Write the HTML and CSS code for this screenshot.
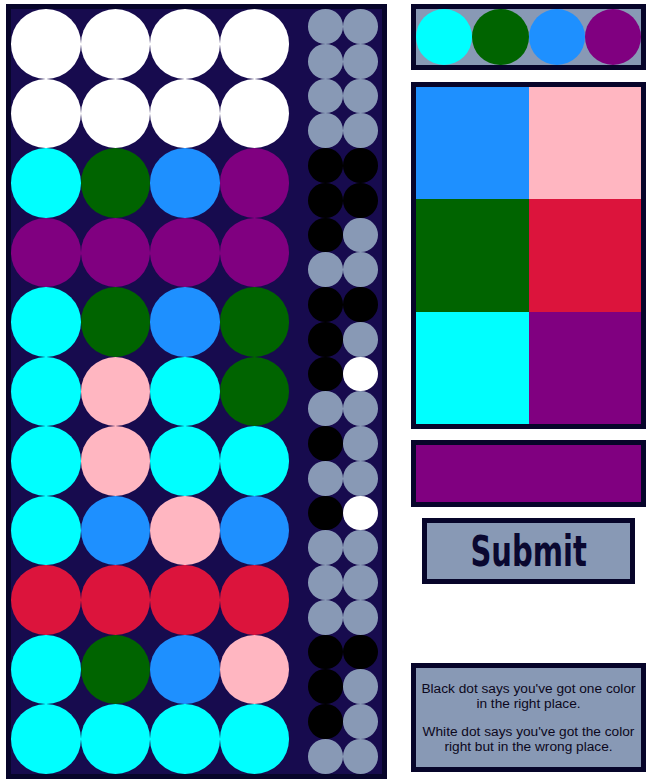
FILE: index.html
```html
<!DOCTYPE html>
<html>
<head>
<meta charset="utf-8">
<link rel="stylesheet" href="styles.css">
</head>
<body>
<div class="page">
  <div class="board">
    <div class="row">
      <span class="hole white"></span><span class="hole white"></span><span class="hole white"></span><span class="hole white"></span>
      <div class="pegs"><span class="peg"></span><span class="peg"></span><span class="peg"></span><span class="peg"></span></div>
    </div>
    <div class="row">
      <span class="hole white"></span><span class="hole white"></span><span class="hole white"></span><span class="hole white"></span>
      <div class="pegs"><span class="peg"></span><span class="peg"></span><span class="peg"></span><span class="peg"></span></div>
    </div>
    <div class="row">
      <span class="hole cyan"></span><span class="hole green"></span><span class="hole blue"></span><span class="hole purple"></span>
      <div class="pegs"><span class="peg black"></span><span class="peg black"></span><span class="peg black"></span><span class="peg black"></span></div>
    </div>
    <div class="row">
      <span class="hole purple"></span><span class="hole purple"></span><span class="hole purple"></span><span class="hole purple"></span>
      <div class="pegs"><span class="peg black"></span><span class="peg"></span><span class="peg"></span><span class="peg"></span></div>
    </div>
    <div class="row">
      <span class="hole cyan"></span><span class="hole green"></span><span class="hole blue"></span><span class="hole green"></span>
      <div class="pegs"><span class="peg black"></span><span class="peg black"></span><span class="peg black"></span><span class="peg"></span></div>
    </div>
    <div class="row">
      <span class="hole cyan"></span><span class="hole pink"></span><span class="hole cyan"></span><span class="hole green"></span>
      <div class="pegs"><span class="peg black"></span><span class="peg whitepeg"></span><span class="peg"></span><span class="peg"></span></div>
    </div>
    <div class="row">
      <span class="hole cyan"></span><span class="hole pink"></span><span class="hole cyan"></span><span class="hole cyan"></span>
      <div class="pegs"><span class="peg black"></span><span class="peg"></span><span class="peg"></span><span class="peg"></span></div>
    </div>
    <div class="row">
      <span class="hole cyan"></span><span class="hole blue"></span><span class="hole pink"></span><span class="hole blue"></span>
      <div class="pegs"><span class="peg black"></span><span class="peg whitepeg"></span><span class="peg"></span><span class="peg"></span></div>
    </div>
    <div class="row">
      <span class="hole crimson"></span><span class="hole crimson"></span><span class="hole crimson"></span><span class="hole crimson"></span>
      <div class="pegs"><span class="peg"></span><span class="peg"></span><span class="peg"></span><span class="peg"></span></div>
    </div>
    <div class="row">
      <span class="hole cyan"></span><span class="hole green"></span><span class="hole blue"></span><span class="hole pink"></span>
      <div class="pegs"><span class="peg black"></span><span class="peg black"></span><span class="peg black"></span><span class="peg"></span></div>
    </div>
    <div class="row">
      <span class="hole cyan"></span><span class="hole cyan"></span><span class="hole cyan"></span><span class="hole cyan"></span>
      <div class="pegs"><span class="peg black"></span><span class="peg"></span><span class="peg"></span><span class="peg"></span></div>
    </div>
  </div>

  <div class="side">
    <div class="panel secret">
      <span class="sdot cyan"></span><span class="sdot green"></span><span class="sdot blue"></span><span class="sdot purple"></span>
    </div>
    <div class="panel palette">
      <span class="swatch blue"></span><span class="swatch pink"></span>
      <span class="swatch green"></span><span class="swatch crimson"></span>
      <span class="swatch cyan"></span><span class="swatch purple"></span>
    </div>
    <div class="panel selected purple"></div>
    <button class="submit"><span class="submit-label">Submit</span></button>
    <div class="panel help">
      <p>Black dot says you've got one color in the right place.</p>
      <p>White dot says you've got the color right but in the wrong place.</p>
    </div>
  </div>
</div>
</body>
</html>
```
FILE: styles.css
```css
html, body {
  margin: 0;
  padding: 0;
  background: #ffffff;
}

.page {
  display: flex;
  align-items: flex-start;
  padding: 4px 0 0 6px;
}

.board {
  border: 5px solid #07052a;
  background: #170b4e;
  width: 371px;
  display: flex;
  flex-direction: column;
}

.row {
  display: flex;
  height: 69.5px;
}

.hole {
  display: block;
  width: 69.5px;
  height: 69.5px;
  border-radius: 50%;
  flex: none;
}

.pegs {
  margin-left: 19px;
  width: 69.5px;
  display: grid;
  grid-template-columns: 34.75px 34.75px;
  grid-template-rows: 34.75px 34.75px;
}

.peg {
  display: block;
  border-radius: 50%;
  background: #8899b5;
}

.peg.black { background: #000000; }
.peg.whitepeg { background: #ffffff; }

.white { background: #ffffff; }
.cyan { background: #00ffff; }
.green { background: #006400; }
.blue { background: #1e90ff; }
.purple { background: #800080; }
.pink { background: #ffb6c1; }
.crimson { background: #dc143c; }

.side {
  margin-left: 24px;
  width: 235px;
  display: flex;
  flex-direction: column;
}

.panel {
  border: 5px solid #07052a;
  width: 225px;
}

.secret {
  background: #8899b5;
  display: flex;
  height: 56px;
}

.sdot {
  display: block;
  width: 56.25px;
  height: 56.25px;
  border-radius: 50%;
  flex: none;
}

.palette {
  margin-top: 12px;
  display: grid;
  grid-template-columns: 112.5px 112.5px;
  grid-template-rows: repeat(3, 112.33px);
}

.swatch {
  display: block;
}

.selected {
  margin-top: 11px;
  height: 57px;
}

.submit {
  margin: 11px auto 0;
  width: 213px;
  height: 66px;
  border: 5px solid #07052a;
  background: #8899b5;
  padding: 0;
  display: flex;
  align-items: center;
  justify-content: center;
  cursor: pointer;
}

.submit-label {
  display: inline-block;
  font-family: "DejaVu Sans Condensed", "DejaVu Sans", sans-serif;
  font-weight: bold;
  font-size: 43px;
  line-height: 1;
  color: #0a0830;
  transform: scaleX(0.75);
  margin-top: 1px;
}

.help {
  margin-top: 79px;
  background: #8899b5;
  text-align: center;
  font-family: "Liberation Sans", Arial, sans-serif;
  font-size: 13.7px;
  line-height: 15px;
  color: #0c0820;
}

.help p {
  margin: 13px 2px;
}
```
